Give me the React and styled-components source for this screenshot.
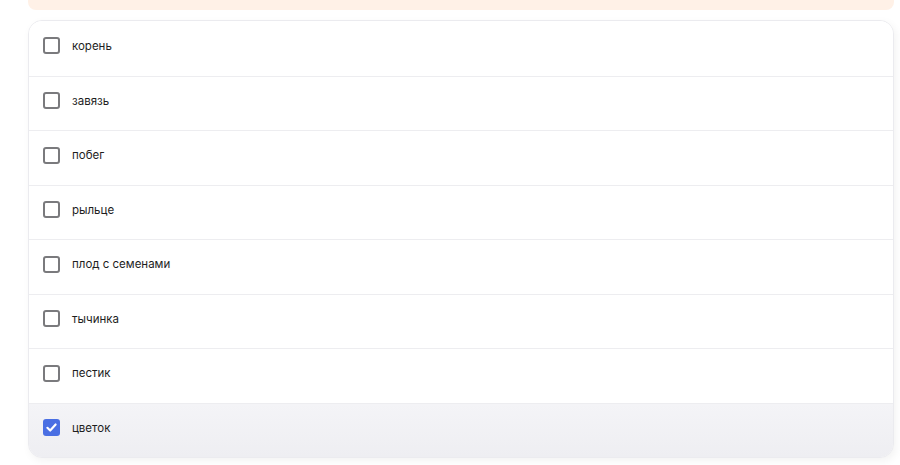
import React from "react";
import styled, { createGlobalStyle } from "styled-components";

const Global = createGlobalStyle`
  html, body { margin: 0; padding: 0; background: #ffffff; }
  body { font-family: Inter, "Noto Sans", Arial, sans-serif; }
  * { box-sizing: border-box; }
`;

const Page = styled.div`
  width: 900px;
  height: 465px;
  overflow: hidden;
  padding: 0 6px 0 28px;
  display: flex;
  flex-direction: column;
  gap: 10px;
`;

const Notice = styled.div`
  height: 10px;
  background: #fff1e7;
  border-radius: 0 0 8px 8px;
`;

const Card = styled.div`
  border: 1px solid #ebebef;
  border-radius: 14px;
  overflow: hidden;
  background: #fff;
  box-shadow: 2px 3px 8px rgba(0, 0, 0, 0.05);
`;

const Row = styled.label`
  display: flex;
  align-items: center;
  gap: 12px;
  height: 54.5px;
  padding: 0 0 5px 14px;
  border-top: ${(p) => (p.$first ? "none" : "1px solid #ededf0")};
  background: ${(p) =>
    p.$checked ? "linear-gradient(#f4f4f7, #eeeef2)" : "#ffffff"};
  font-size: 11.5px;
  color: #1e1e1e;
`;

const Box = styled.span`
  width: 17px;
  height: 17px;
  border-radius: 3px;
  border: ${(p) => (p.$checked ? "none" : "2px solid #7a7a7d")};
  background: ${(p) => (p.$checked ? "#4a6fe3" : "#fff")};
  display: flex;
  align-items: center;
  justify-content: center;
  flex-shrink: 0;
`;

const items = [
  "корень",
  "завязь",
  "побег",
  "рыльце",
  "плод с семенами",
  "тычинка",
  "пестик",
  "цветок",
];

export default function App() {
  return (
    <>
      <Global />
      <Page>
        <Notice />
        <Card>
          {items.map((t, i) => {
            const checked = t === "цветок";
            return (
              <Row key={t} $first={i === 0} $checked={checked}>
                <Box $checked={checked}>
                  {checked && (
                    <svg width="13" height="13" viewBox="0 0 12 12">
                      <path
                        d="M2.2 6.3 L4.8 8.8 L9.8 3.2"
                        fill="none"
                        stroke="#fff"
                        strokeWidth="2"
                        strokeLinecap="round"
                        strokeLinejoin="round"
                      />
                    </svg>
                  )}
                </Box>
                {t}
              </Row>
            );
          })}
        </Card>
      </Page>
    </>
  );
}
